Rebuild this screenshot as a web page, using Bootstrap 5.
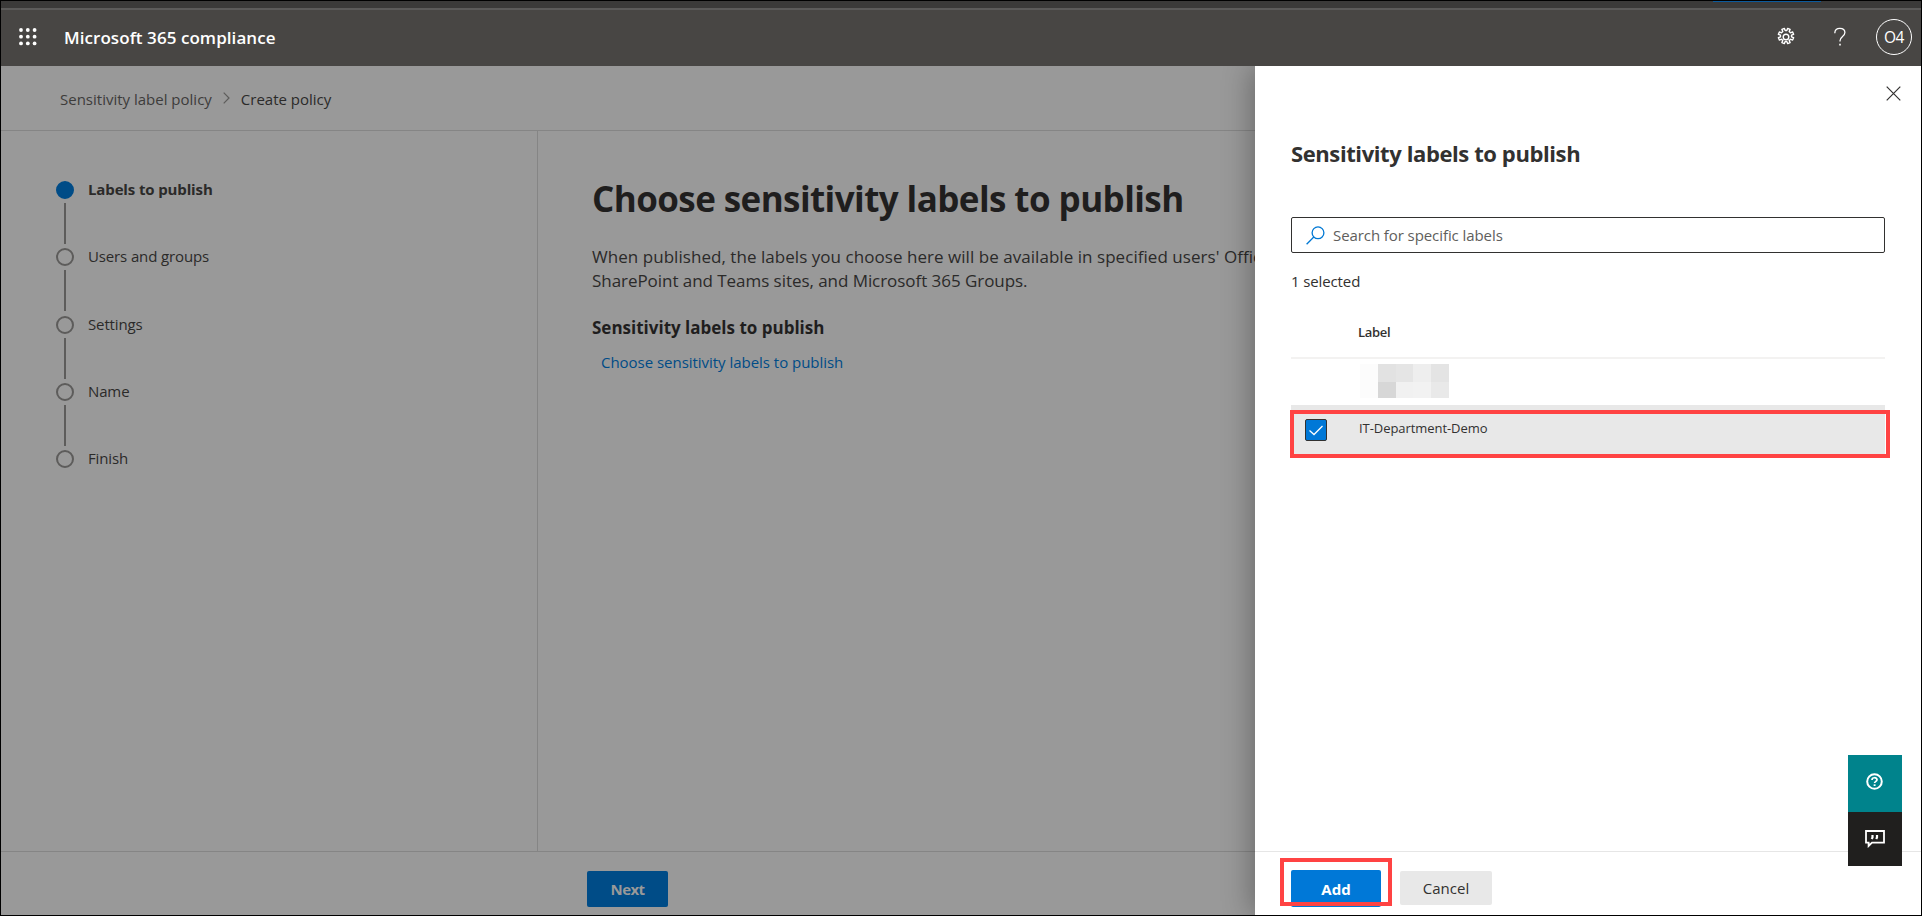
<!DOCTYPE html>
<html lang="en">
<head>
<meta charset="utf-8">
<title>Microsoft 365 compliance</title>
<meta name="viewport" content="width=device-width, initial-scale=1">
<link rel="stylesheet" href="https://cdn.jsdelivr.net/npm/bootstrap@5.3.0/dist/css/bootstrap.min.css">
<style>
body{font-family:"Open Sans","Noto Sans",sans-serif;font-size:15px;line-height:20px;color:#2b2a29;background:#999;overflow:hidden}
svg{display:block;flex:none}
.app{height:916px;border:1px solid #000}
.tabstrip{height:9px;background:#3b3a39;border-bottom:2px solid #5c5b5a}
.tabline{width:108px;height:1px;margin-right:100px;background:#0b5a9c}
.suite{height:56px;background:#484644;color:#fff;padding:0 9px 2px 18px}
.brand{font-size:17px;font-weight:600;margin-left:27px;padding-top:1px;letter-spacing:.06px}
.help{margin-left:38px}
.avatar{width:36px;height:36px;border:1px solid #fff;font-size:15.5px;letter-spacing:-.4px;margin-left:30px}
.crumbs{height:65px;border-bottom:1px solid #858585;padding:2px 0 0 59px}
.chev{margin:0 11px 2px}
.steps{width:537px;border-right:1px solid #858585;padding:50px 0 0 55px}
.step{height:18px;letter-spacing:-.13px}
.step span{position:relative;top:-1px}
.dot{width:18px;height:18px;border:2px solid #5d5c5b;margin-right:14px}
.dot.on{background:#004c87;border-color:#004c87}
.stem{width:2px;height:41px;margin:4px 0 4.3px 8px;background:#5d5c5b}
.work{padding:45px 0 0 54px;white-space:nowrap}
.work h1{font-size:35px;line-height:46px;font-weight:700;color:#1f1e1e;letter-spacing:-.58px}
.intro{font-size:17px;line-height:24px;margin-top:23px}
.sub{font-size:17px;line-height:24px;font-weight:700;color:#1f1e1e;margin-top:23px}
.choose{color:#004c87;margin:12px 0 0 9px;letter-spacing:-.03px}
.foot{height:64px;border-top:1px solid #858585;padding:19px 0 0 586px}
.btn{border-radius:2px;padding:0;border:0;font-size:15px;line-height:20px}
.next{width:81px;height:36px;background:#004c87!important;color:#999!important;font-weight:700;letter-spacing:-.6px}
.shade{top:66px;right:1px;width:760px;height:849px;overflow:hidden}
.flyout{width:666px;height:849px;background:#fff;color:#323130;box-shadow:-3px 0 28px rgba(0,0,0,.32)}
.flyout .gutter{padding:0 36px}
.flyout h2{font-size:22px;line-height:30px;font-weight:700;letter-spacing:-.4px;margin:37px 0 49px}
.search{height:36px;border:1px solid #323130;border-radius:2px;padding-left:14px;color:#605e5c;letter-spacing:-.08px}
.count{margin-top:18px;letter-spacing:-.12px}
.list{margin-top:31px;font-size:13px}
.list-head{height:37px;padding-left:67px;font-weight:600;border-bottom:2px solid #f3f2f1;letter-spacing:-.3px}
.list-item{height:46px;padding:5px 0 0 69px}
.mosaic{display:grid;grid-template:18px 16px / 18px 18px 17px 18px 18px;width:89px}
.list-item.chosen{height:50px;background:#e8e8e8;padding:14px 0 0 14px;letter-spacing:-.06px}
.list-item.chosen svg{margin-right:32px}
.list-item.chosen span{position:relative;top:-1px}
.ring{border:4px solid #ff4343;pointer-events:none}
.ring-row{left:-1px;top:5px;width:600px;height:48px}
.ring-add{left:-11px;top:-12px;width:112px;height:48px}
.actions{height:64px;border-top:1px solid #e6e6e6;padding-top:18px!important}
.add{width:90px;height:37px;background:#0078d7!important;color:#fff!important;font-weight:700}
.cancel{width:92px;height:34px;margin:1px 0 0 19px;background:#e8e8e8!important;color:#323130!important}
.side{right:20px;top:755px;width:54px}
.side div{height:57px;background:#00838c}
.side div+div{height:54px;background:#201f1e}
</style>
</head>
<body>
<div class="app d-flex flex-column">
  <div class="tabstrip d-flex justify-content-end"><div class="tabline"></div></div>
  <header class="suite d-flex align-items-center">
    <svg width="18" height="18" fill="#fff"><g id="r"><circle cx="2" cy="2" r="1.9"/><circle cx="8.8" cy="2" r="1.9"/><circle cx="15.6" cy="2" r="1.9"/></g><use href="#r" y="6.7"/><use href="#r" y="13.4"/></svg>
    <span class="brand">Microsoft 365 compliance</span>
    <div class="d-flex align-items-center ms-auto">
      <svg width="20" height="20" viewBox="0 0 20 20" fill="none" stroke="#fff" stroke-width="1.4" stroke-linejoin="round"><circle cx="10" cy="10" r="2.8"/><path d="M8.300 1.400 9.200 3.500h1.600l.9-2.100 2.400 1-.9 2.100 1.300 1.300 2.100-.9 1 2.400-2.100.9v1.600l2.100.9-1 2.400-2.100-.9-1.300 1.300.9 2.100-2.400 1-.9-2.100H9.200l-.9 2.100-2.400-1 .9-2.100-1.300-1.300-2.100.9-1-2.400 2.100-.9V8.200l-2.100-.9 1-2.400 2.100.9 1.300-1.300-.9-2.100z"/></svg>
      <svg class="help" width="12" height="20" viewBox="0 0 12 20" fill="none" stroke="#fff" stroke-width="1.3"><path d="M.8 6.200C.8 3 2.800 1.300 5.800 1.300s5.100 1.600 5.100 4.300c0 4-4.900 3.800-4.900 8.200v.8"/><path d="M6 16.800v1.700" stroke-width="1.6"/></svg>
      <div class="avatar rounded-circle d-flex align-items-center justify-content-center"><span>O4</span></div>
    </div>
  </header>
  <nav class="crumbs d-flex align-items-center">
    <span style="color:#3d3c3b">Sensitivity label policy</span>
    <svg class="chev" width="7" height="12" fill="none" stroke="#5d5c5b" stroke-width="1.200"><path d="M.7.700 6 6 .7 11.300"/></svg>
    <span>Create policy</span>
  </nav>
  <main class="d-flex flex-grow-1">
    <aside class="steps flex-shrink-0">
      <div class="step d-flex align-items-center fw-bold"><i class="dot on rounded-circle"></i><span>Labels to publish</span></div><div class="stem"></div>
      <div class="step d-flex align-items-center"><i class="dot rounded-circle"></i><span>Users and groups</span></div><div class="stem"></div>
      <div class="step d-flex align-items-center"><i class="dot rounded-circle"></i><span>Settings</span></div><div class="stem"></div>
      <div class="step d-flex align-items-center"><i class="dot rounded-circle"></i><span>Name</span></div><div class="stem"></div>
      <div class="step d-flex align-items-center"><i class="dot rounded-circle"></i><span>Finish</span></div>
    </aside>
    <section class="work">
      <h1 class="mb-0">Choose sensitivity labels to publish</h1>
      <p class="intro mb-0"><span style="letter-spacing:.045px">When published, the labels you choose here will be available in specified users' Office</span><br><span style="letter-spacing:-.05px">SharePoint and Teams sites, and Microsoft 365 Groups.</span></p>
      <div class="sub">Sensitivity labels to publish</div>
      <div class="choose">Choose sensitivity labels to publish</div>
    </section>
  </main>
  <footer class="foot"><button class="btn btn-primary next">Next</button></footer>
</div>

<div class="shade position-absolute d-flex justify-content-end">
  <div class="flyout d-flex flex-column">
    <div class="d-flex justify-content-end" style="padding:20px 20px 0 0"><svg width="15" height="15" fill="none" stroke="#323130" stroke-width="1.2"><path d="M.7.7l13.600 13.600M14.300.7.7 14.300"/></svg></div>
    <div class="gutter flex-grow-1">
      <h2>Sensitivity labels to publish</h2>
      <div class="search d-flex align-items-center"><svg width="19" height="19" viewBox="0 0 19 19" fill="none" stroke="#0078d4" stroke-width="1.3"><circle cx="12" cy="6.8" r="5.9"/><path d="M7.800 11 .6 18.300"/></svg><span style="margin-left:8px">Search for specific labels</span></div>
      <div class="count">1 selected</div>
      <div class="list">
        <div class="list-head">Label</div>
        <div class="list-item"><div class="mosaic"><i style="background:#fcfcfc"></i><i style="background:#e2e2e2"></i><i style="background:#e5e5e5"></i><i style="background:#eee"></i><i style="background:#e4e4e4"></i><i style="background:#fcfcfc"></i><i style="background:#d7d7d7"></i><i style="background:#f1f1f1"></i><i style="background:#f2f2f2"></i><i style="background:#e9e9e9"></i></div></div>
        <div class="list-item chosen position-relative d-flex">
          <svg width="22" height="22" fill="none"><rect x=".5" y=".5" width="21" height="21" rx="1.5" fill="#0078d7" stroke="#323130"/><path d="M4.500 11.500 9 15.500l8.500-8.500" stroke="#fff" stroke-width="1.3"/></svg>
          <span>IT-Department-Demo</span>
          <div class="ring ring-row position-absolute"></div>
        </div>
      </div>
    </div>
    <div class="actions gutter d-flex align-items-start position-relative">
      <div class="position-relative"><button class="btn btn-primary add d-block">Add</button><div class="ring ring-add position-absolute"></div></div>
      <button class="btn cancel">Cancel</button>
    </div>
  </div>
</div>

<div class="side position-absolute">
  <div class="d-flex align-items-center justify-content-center"><svg width="17" height="17" viewBox="0 0 17 17" fill="none" stroke="#fff" stroke-width="2" style="margin:0 1px 4px 0"><circle cx="8.5" cy="8.5" r="7.3"/><path d="M6 7c0-3 5-3 5-.2 0 1.600-2.400 1.500-2.400 3.300" stroke-width="1.7"/><path d="M8.600 11.300v1.700" stroke-width="1.9"/></svg></div>
  <div class="d-flex align-items-center justify-content-center"><svg width="20" height="18" viewBox="0 0 20 18" fill="none" stroke="#fff" stroke-width="1.8"><path d="M1 1h18v11.700H7L3.600 16v-3.300H1z"/><path d="M7.500 5v2.500L6.700 9M12 5v2.500L11.200 9" stroke-width="2.200"/></svg></div>
</div>
<script src="https://cdn.jsdelivr.net/npm/bootstrap@5.3.0/dist/js/bootstrap.bundle.min.js"></script>
</body>
</html>
